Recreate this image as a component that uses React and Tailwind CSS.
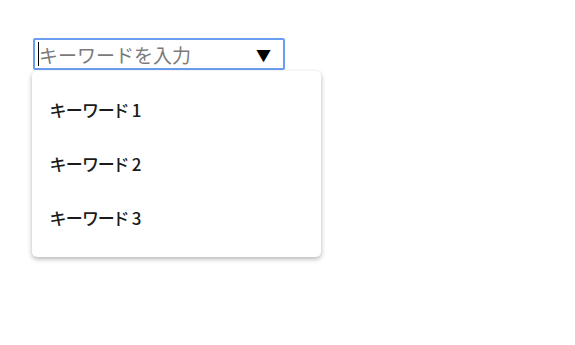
export default function App() {
  const items = ['キーワード 1', 'キーワード 2', 'キーワード 3']
  return (
    <div className="min-h-[345px] bg-white pl-[33px] pt-[38px]" style={{ fontFamily: '"Noto Sans CJK JP", "Noto Sans", sans-serif' }}>
      <div className="w-[252px]">
        <div className="flex h-[32px] w-[252px] items-center rounded-[2px] border-2 border-[#6a9ef0] pl-[3px] pr-[12px]">
          <span className="h-[24px] w-px bg-black" />
          <span className="flex-1 text-[19px] leading-none text-[#7a7a7a]">キーワードを入力</span>
          <span className="text-[15px] leading-none text-black">▼</span>
        </div>
      </div>
      <div className="-ml-px mt-px w-[289px] rounded-[5px] bg-white py-[12px] shadow-[0_2px_5px_rgba(0,0,0,0.3)]">
        {items.map((t) => (
          <div key={t} className="flex h-[54px] items-center pl-[18px] text-[17px] font-medium text-[#1a1a1a] [font-feature-settings:'palt']">
            {t}
          </div>
        ))}
      </div>
    </div>
  )
}
